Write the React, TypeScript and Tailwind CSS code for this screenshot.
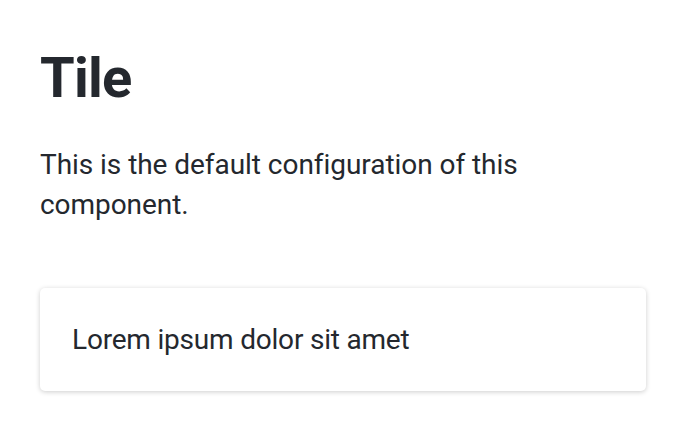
export default function App() {
  return (
    <div className="min-h-screen bg-white px-10 pt-11 font-['Roboto',sans-serif] text-[#24282e]">
      <h1 className="text-[56px] font-bold leading-[68px] tracking-[-0.75px]">Tile</h1>
      <p className="mt-[33px] text-[28px] leading-[40px] tracking-[-0.05px]">
        This is the default configuration of this component.
      </p>
      <div className="mt-[63px] rounded-[5px] bg-white px-8 pt-8 pb-[31px] shadow-[0_1px_5px_rgba(0,0,0,0.2)]">
        <p className="text-[28px] leading-[40px] tracking-[-0.2px]">Lorem ipsum dolor sit amet</p>
      </div>
    </div>
  );
}
